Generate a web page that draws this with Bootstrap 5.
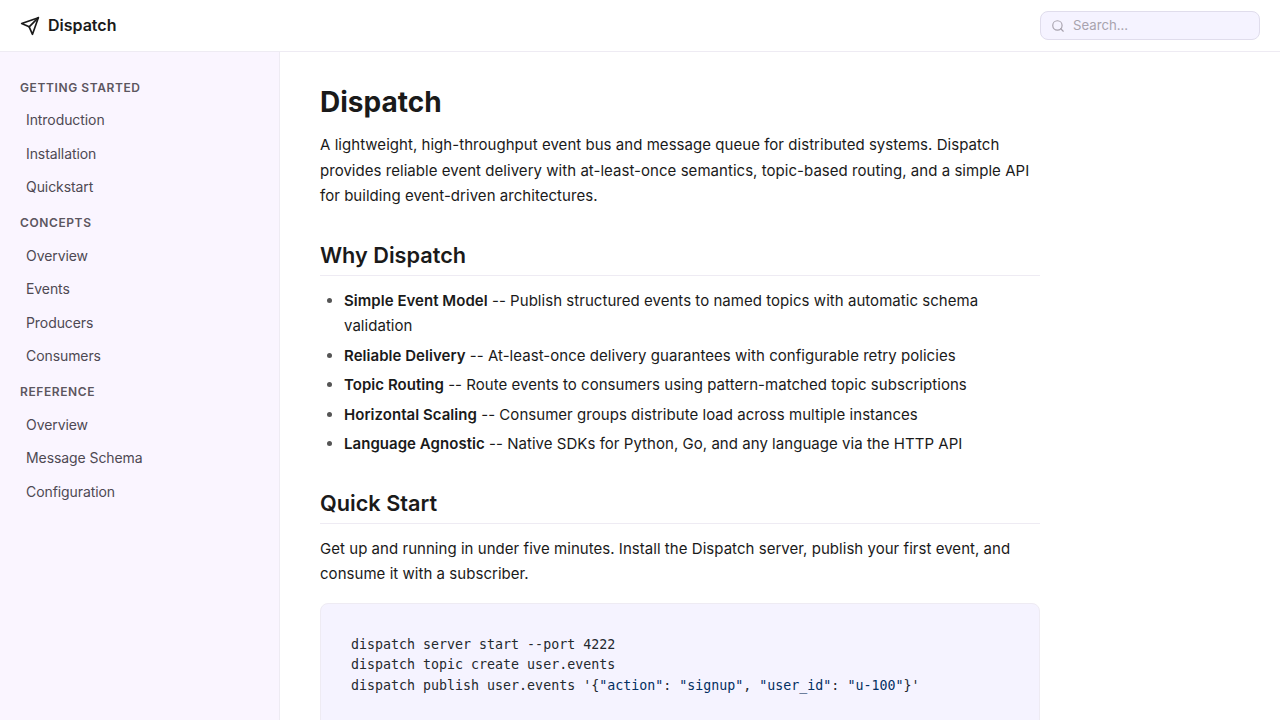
<!DOCTYPE html>
<html lang="en">
<head>
<meta charset="utf-8">
<title>Dispatch</title>
<link href="https://cdn.jsdelivr.net/npm/bootstrap@5.3.0/dist/css/bootstrap.min.css" rel="stylesheet">
<style>
html,body{height:100%;overflow:hidden}
body{font-family:Inter,"Liberation Sans",sans-serif;font-size:15px;line-height:1.7;color:#1a1a1a;background:#fff}
.topbar{height:52px;padding:0 20px;border-bottom:1px solid #eeebf3;background:#fff}
.brand{font-size:16px;font-weight:600;color:#1a1a1a;gap:8px;text-decoration:none;line-height:1}
.brand span{padding-bottom:2px}
.searchbox{width:220px;height:29px;background:#f5f3ff;border:1px solid #e0ddec;border-radius:8px;padding:0 10px;gap:8px;color:#a8a3ae;font-size:13.2px}
.shell{height:668px}
.side{width:280px;flex:none;background:#faf5ff;border-right:1px solid #eeebf3;padding:24px 20px}
.side-head{font-size:12px;font-weight:600;letter-spacing:.6px;text-transform:uppercase;color:#5c5660;line-height:24px;margin:0}
.side-list{margin:0 0 7.6px;padding:3.4px 0 0;list-style:none}
.side-list a{display:block;padding:0 6px;font-size:14px;letter-spacing:-.08px;color:#4e4953;text-decoration:none;line-height:33.5px}
.doc{width:800px;padding:28px 40px 0}
.doc h1{font-size:28px;font-weight:700;margin:0 0 8px;line-height:44px}
.doc p{margin:0 0 16px;letter-spacing:.04px}
.doc h2{font-size:21.7px;font-weight:600;line-height:35.5px;margin:29px 0 12px;padding-bottom:1.5px;border-bottom:1px solid #eeebf3}
.doc ul{margin:0 0 13.8px;padding-left:24px;letter-spacing:.04px}
.doc li{margin-bottom:4px}
.doc li::marker{color:#555}
.doc strong{font-weight:600}
.codeblock{margin:0;background:#f5f3ff;border:1px solid #eeebf3;border-radius:8px;padding:31.5px 30px 30px;font-family:"DejaVu Sans Mono",monospace;font-size:13.3px;line-height:20.4px;height:200px;color:#24292e;overflow:hidden}
.codeblock .str{color:#032f62}
</style>
</head>
<body>
<header class="topbar d-flex align-items-center justify-content-between">
  <a class="brand d-flex align-items-center" href="#">
    <svg width="20" height="20" viewBox="0 0 24 24" fill="none" stroke="#1a1a1a" stroke-width="2" stroke-linecap="round" stroke-linejoin="round"><path d="M22 2 11 13"/><path d="M22 2 15 22 11 13 2 9Z"/></svg>
    <span>Dispatch</span>
  </a>
  <div class="searchbox d-flex align-items-center">
    <svg width="14" height="14" viewBox="0 0 24 24" fill="none" stroke="#a8a3ae" stroke-width="2" stroke-linecap="round"><circle cx="11" cy="11" r="8"/><path d="m21 21-4.3-4.3"/></svg>
    <span>Search...</span>
  </div>
</header>
<div class="shell d-flex">
  <nav class="side">
    <p class="side-head">Getting Started</p>
    <ul class="side-list">
      <li><a href="#">Introduction</a></li>
      <li><a href="#">Installation</a></li>
      <li><a href="#">Quickstart</a></li>
    </ul>
    <p class="side-head">Concepts</p>
    <ul class="side-list">
      <li><a href="#">Overview</a></li>
      <li><a href="#">Events</a></li>
      <li><a href="#">Producers</a></li>
      <li><a href="#">Consumers</a></li>
    </ul>
    <p class="side-head">Reference</p>
    <ul class="side-list">
      <li><a href="#">Overview</a></li>
      <li><a href="#">Message Schema</a></li>
      <li><a href="#">Configuration</a></li>
    </ul>
  </nav>
  <main class="doc">
    <h1>Dispatch</h1>
    <p>A lightweight, high-throughput event bus and message queue for distributed systems. Dispatch provides reliable event delivery with at-least-once semantics, topic-based routing, and a simple API for building event-driven architectures.</p>
    <h2>Why Dispatch</h2>
    <ul>
      <li><strong>Simple Event Model</strong> -- Publish structured events to named topics with automatic schema validation</li>
      <li><strong>Reliable Delivery</strong> -- At-least-once delivery guarantees with configurable retry policies</li>
      <li><strong>Topic Routing</strong> -- Route events to consumers using pattern-matched topic subscriptions</li>
      <li><strong>Horizontal Scaling</strong> -- Consumer groups distribute load across multiple instances</li>
      <li><strong>Language Agnostic</strong> -- Native SDKs for Python, Go, and any language via the HTTP API</li>
    </ul>
    <h2>Quick Start</h2>
    <p>Get up and running in under five minutes. Install the Dispatch server, publish your first event, and consume it with a subscriber.</p>
    <pre class="codeblock">dispatch server start --port 4222
dispatch topic create user.events
dispatch publish user.events '{<span class="str">"action"</span>: <span class="str">"signup"</span>, <span class="str">"user_id"</span>: <span class="str">"u-100"</span>}'</pre>
  </main>
</div>
</body>
</html>
